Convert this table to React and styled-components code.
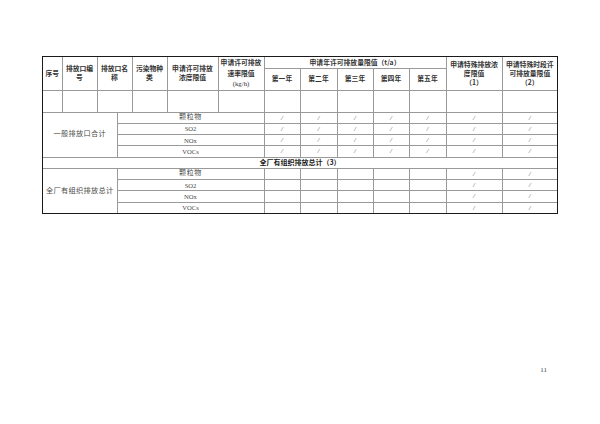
import React from "react";
import styled, { createGlobalStyle } from "styled-components";

const Global = createGlobalStyle`
  html, body { margin: 0; padding: 0; background: #fff; }
  body { font-family: "Noto Sans CJK SC", "Noto Sans", sans-serif; }
`;

const Page = styled.div`
  width: 600px;
  height: 424px;
  box-sizing: border-box;
  padding: 56px 0 0 42px;
  background: #fff;
`;

const Frame = styled.div`
  width: 516px;
  box-sizing: border-box;
  border: 1px solid #1a1a1a;
`;

const Sheet = styled.table`
  width: 514px;
  table-layout: fixed;
  border-collapse: collapse;
  border-style: hidden;
`;

const Row = styled.tr`
  height: ${(p) => p.$h}px;
`;

const Head = styled.th`
  border: 1px solid #9a9a9a;
  padding: 0 1px;
  font-family: "Noto Sans CJK SC", sans-serif;
  font-weight: 700;
  font-size: 6.8px;
  line-height: ${(p) => p.$lh || 9.5}px;
  color: #333;
  text-align: center;
  vertical-align: middle;
  white-space: nowrap;
  overflow: hidden;
`;

const Unit = styled.span`
  font-family: "Liberation Serif", serif;
  font-weight: 400;
  font-size: 6.8px;
  color: #333;
`;

const Cell = styled.td`
  border: 1px solid #9a9a9a;
  padding: 0;
  font-family: "Liberation Serif", "Noto Sans CJK SC", serif;
  font-size: ${(p) => p.$fs || 6.8}px;
  font-weight: 400;
  line-height: 9px;
  color: #4a4a4a;
  text-align: center;
  vertical-align: middle;
  white-space: nowrap;
  overflow: hidden;
  letter-spacing: ${(p) => p.$ls || 0}px;
`;

const Banner = styled.td`
  border: 1px solid #9a9a9a;
  padding: 0;
  font-family: "Noto Sans CJK SC", sans-serif;
  font-weight: 700;
  font-size: 7px;
  line-height: 9px;
  color: #1a1a1a;
  text-align: center;
  vertical-align: middle;
`;

const Slash = styled.span`
  font-family: "Liberation Serif", serif;
  font-style: italic;
  font-size: 7px;
  color: #555;
`;

const PageNumber = styled.div`
  width: 505px;
  margin-top: 152px;
  text-align: right;
  font-family: "Liberation Serif", serif;
  font-size: 7px;
  line-height: 8px;
  color: #444;
`;

const cols = [19, 35, 20, 15, 35, 51, 46, 36, 37, 36, 36, 37, 56, 55];
const years = ["第一年", "第二年", "第三年", "第四年", "第五年"];
const pollutants = ["颗粒物", "SO2", "NOx", "VOCs"];
const rowH = 11.25;

function Lines({ items }) {
  return items.map((t, i) => (
    <React.Fragment key={i}>
      {i > 0 && <br />}
      {t}
    </React.Fragment>
  ));
}

function Group({ label, yearSlash }) {
  return pollutants.map((p, i) => (
    <Row $h={rowH} key={p}>
      {i === 0 && (
        <Cell colSpan={3} rowSpan={4} $fs={7.2} $ls={0.3}>
          {label}
        </Cell>
      )}
      <Cell colSpan={4} $fs={p === "颗粒物" ? 7 : 6.6} $ls={p === "颗粒物" ? 0.6 : 0}>
        {p}
      </Cell>
      {years.map((y) => (
        <Cell key={y}>{yearSlash && <Slash>/</Slash>}</Cell>
      ))}
      <Cell>
        <Slash>/</Slash>
      </Cell>
      <Cell>
        <Slash>/</Slash>
      </Cell>
    </Row>
  ));
}

export default function App() {
  return (
    <Page>
      <Global />
      <Frame>
        <Sheet>
          <colgroup>
            {cols.map((w, i) => (
              <col key={i} style={{ width: w }} />
            ))}
          </colgroup>
          <thead>
            <Row $h={11}>
              <Head rowSpan={2}>序号</Head>
              <Head rowSpan={2}>
                <Lines items={["排放口编", "号"]} />
              </Head>
              <Head rowSpan={2} colSpan={2}>
                <Lines items={["排放口名", "称"]} />
              </Head>
              <Head rowSpan={2}>
                <Lines items={["污染物种", "类"]} />
              </Head>
              <Head rowSpan={2}>
                <Lines items={["申请许可排放", "浓度限值"]} />
              </Head>
              <Head rowSpan={2} $lh={10.2}>
                申请许可排放
                <br />
                速率限值
                <br />
                <Unit>(kg/h)</Unit>
              </Head>
              <Head colSpan={5}>申请年许可排放量限值（t/a）</Head>
              <Head rowSpan={2} $lh={9}>
                <Lines items={["申请特殊排放浓", "度限值", "（1）"]} />
              </Head>
              <Head rowSpan={2} $lh={9}>
                <Lines items={["申请特殊时段许", "可排放量限值", "（2）"]} />
              </Head>
            </Row>
            <Row $h={22}>
              {years.map((y) => (
                <Head key={y}>{y}</Head>
              ))}
            </Row>
          </thead>
          <tbody>
            <Row $h={22}>
              <Cell />
              <Cell />
              <Cell colSpan={2} />
              <Cell />
              <Cell />
              <Cell />
              {years.map((y) => (
                <Cell key={y} />
              ))}
              <Cell />
              <Cell />
            </Row>
            <Group label="一般排放口合计" yearSlash />
            <Row $h={rowH}>
              <Banner colSpan={14}>全厂有组织排放总计（3）</Banner>
            </Row>
            <Group label="全厂有组织排放总计" yearSlash={false} />
          </tbody>
        </Sheet>
      </Frame>
      <PageNumber>11</PageNumber>
    </Page>
  );
}
